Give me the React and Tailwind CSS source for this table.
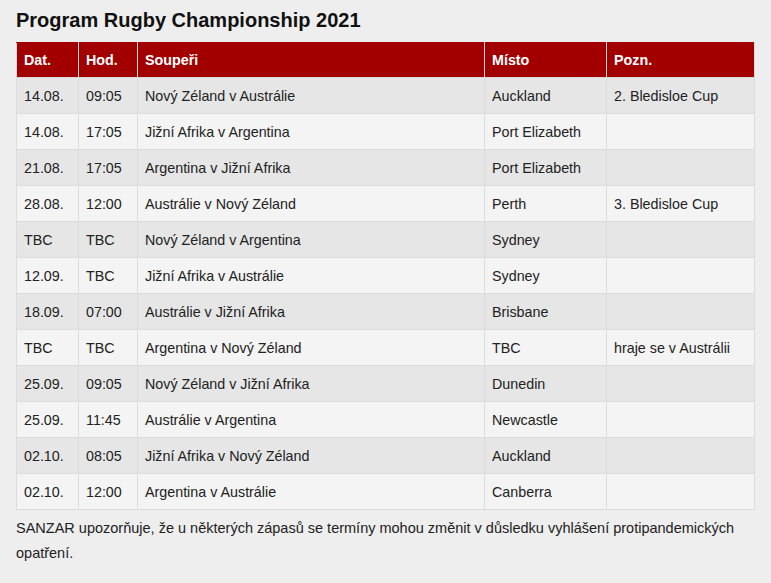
import React from 'react';

const rows = [
  ['14.08.', '09:05', 'Nový Zéland v Austrálie', 'Auckland', '2. Bledisloe Cup'],
  ['14.08.', '17:05', 'Jižní Afrika v Argentina', 'Port Elizabeth', ''],
  ['21.08.', '17:05', 'Argentina v Jižní Afrika', 'Port Elizabeth', ''],
  ['28.08.', '12:00', 'Austrálie v Nový Zéland', 'Perth', '3. Bledisloe Cup'],
  ['TBC', 'TBC', 'Nový Zéland v Argentina', 'Sydney', ''],
  ['12.09.', 'TBC', 'Jižní Afrika v Austrálie', 'Sydney', ''],
  ['18.09.', '07:00', 'Austrálie v Jižní Afrika', 'Brisbane', ''],
  ['TBC', 'TBC', 'Argentina v Nový Zéland', 'TBC', 'hraje se v Austrálii'],
  ['25.09.', '09:05', 'Nový Zéland v Jižní Afrika', 'Dunedin', ''],
  ['25.09.', '11:45', 'Austrálie v Argentina', 'Newcastle', ''],
  ['02.10.', '08:05', 'Jižní Afrika v Nový Zéland', 'Auckland', ''],
  ['02.10.', '12:00', 'Argentina v Austrálie', 'Canberra', ''],
];

const headers = ['Dat.', 'Hod.', 'Soupeři', 'Místo', 'Pozn.'];
const widths = ['w-[62px]', 'w-[59px]', 'w-[347px]', 'w-[122px]', 'w-[148px]'];

export default function App() {
  return (
    <div className="min-h-[583px] bg-[#eeeeee] px-4 pt-2 text-[#222222] font-['Liberation_Sans',Arial,sans-serif]">
      <h1 className="text-[20px] leading-[24px] font-bold text-[#111111]">
        Program Rugby Championship 2021
      </h1>

      <table className="mt-[10px] w-[738px] table-fixed border-collapse text-[14.3px]">
        <thead>
          <tr className="h-[35px] bg-[#a20000] text-white">
            {headers.map((h, i) => (
              <th
                key={h}
                className={`${widths[i]} border border-[#d9d9d9] border-t-[#a20000] px-[7px] pt-[2px] text-left font-bold`}
              >
                {h}
              </th>
            ))}
          </tr>
        </thead>
        <tbody>
          {rows.map((r, idx) => (
            <tr
              key={idx}
              className={`h-[36px] ${idx % 2 === 0 ? 'bg-[#e6e6e6]' : 'bg-[#f4f4f4]'}`}
            >
              {r.map((c, i) => (
                <td key={i} className="border border-[#dcdcdc] px-[7px] pt-[2px] whitespace-nowrap">
                  {c}
                </td>
              ))}
            </tr>
          ))}
        </tbody>
      </table>

      <p className="mt-[6px] text-[14.5px] leading-[25px] w-[738px]">
        SANZAR upozorňuje, že u některých zápasů se termíny mohou změnit v důsledku vyhlášení
        protipandemických opatření.
      </p>
    </div>
  );
}
